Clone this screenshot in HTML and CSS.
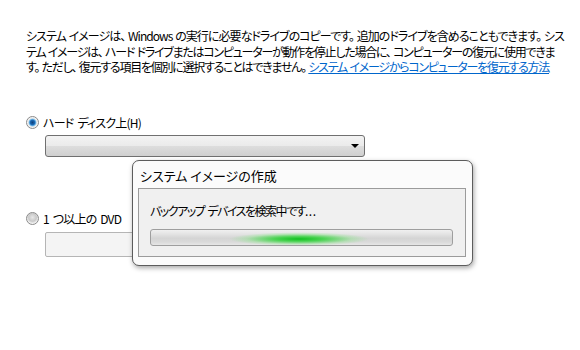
FILE: index.html
```html
<!DOCTYPE html>
<html lang="ja">
<head>
    <meta charset="UTF-8">
    <title>システム イメージの作成</title>
    <link rel="stylesheet" href="styles.css">
</head>
<body>
    <div class="page">
        <p class="intro">
            <span class="line line-first">システム イメージは、 Windows の実行に必要なドライブのコピーです。 追加のドライブを含めることもできます。 シス</span><br>
            <span class="line">テム イメージは、 ハード ドライブまたはコンピューターが動作を停止した場合に、 コンピューターの復元に使用できま</span><br>
            <span class="line">す。 ただし、 復元する項目を個別に選択することはできません。 <a href="#" class="link">システム イメージからコンピューターを復元する方法</a></span>
        </p>

        <div class="option">
            <span class="radio checked"></span>
            <span class="option-label">ハード ディスク上(H)</span>
        </div>
        <div class="select">
            <span class="arrow"></span>
        </div>

        <div class="option option-dvd">
            <span class="radio"></span>
            <span class="option-label">1 つ以上の DVD</span>
        </div>
        <div class="select select-off"></div>
    </div>

    <div class="dialog">
        <div class="dialog-title">システム イメージの作成</div>
        <div class="dialog-body">
            <div class="status">バックアップ デバイスを検索中です<span class="dots">...</span></div>
            <div class="progress">
                <div class="glow"></div>
            </div>
        </div>
    </div>
</body>
</html>
```

FILE: styles.css
```css
body {
    margin: 0;
    background-color: #fff;
    font-family: "Noto Sans CJK JP", "Noto Sans", sans-serif;
    font-size: 12px;
    color: #000;
    font-feature-settings: "palt";
}
.page {
    padding: 28px 20px 0 26px;
}
.intro {
    margin: 0;
    line-height: 15.5px;
    letter-spacing: -1.25px;
    word-spacing: 1px;
}
.line {
    white-space: nowrap;
}
.line-first {
    letter-spacing: -0.95px;
}
.link {
    color: #0066cc;
    text-decoration: underline;
}
.option {
    display: flex;
    align-items: center;
    gap: 4px;
    height: 16px;
    margin-top: 40px;
}
.option-dvd {
    margin-top: 54px;
}
.option-label {
    letter-spacing: -0.8px;
    word-spacing: 2px;
}
.radio {
    width: 11px;
    height: 11px;
    border-radius: 50%;
    border: 1px solid #8a8a8a;
    background: radial-gradient(circle at 50% 40%, #e8e8e8 0, #c9c9c9 45%, #f4f4f4 70%);
}
.radio.checked {
    background: radial-gradient(circle at 50% 50%, #0e3f7a 0, #1c6ab6 30%, #7ac1ee 45%, #e9e9e9 55%, #fdfdfd 75%);
}
.select {
    position: relative;
    width: 318px;
    height: 20px;
    margin: 4px 0 0 19px;
    border: 1px solid #707070;
    border-radius: 3px;
    background: linear-gradient(#f3f3f3 0, #ebebeb 48%, #dddddd 52%, #cfcfcf 100%);
}
.arrow {
    position: absolute;
    right: 5px;
    top: 8px;
    border-left: 4px solid transparent;
    border-right: 4px solid transparent;
    border-top: 4px solid #000;
}
.select-off {
    height: 23px;
    margin-top: 5px;
    border-color: #b5b5b5;
    border-radius: 2px;
    background: #f4f4f4;
}
.dialog {
    position: absolute;
    left: 132px;
    top: 160px;
    width: 339px;
    height: 104px;
    border: 1px solid #5c5c5c;
    border-radius: 7px;
    background: #fbfbfb;
    box-shadow: 1px 2px 5px rgba(0,0,0,0.35);
}
.dialog-title {
    padding: 6px 0 0 7px;
    height: 21px;
    line-height: 18px;
    font-size: 13px;
}
.dialog-body {
    margin: 0 6px 0 5px;
    height: 67px;
    border: 1px solid #9b9b9b;
    background: #f0f0f0;
    padding: 0 12px 0 11px;
}
.status {
    margin-top: 14px;
    line-height: 16px;
    letter-spacing: -1.5px;
    word-spacing: 2px;
}
.dots {
    letter-spacing: 0.5px;
}
.progress {
    position: relative;
    overflow: hidden;
    margin-top: 10px;
    height: 15px;
    border: 1px solid #9e9e9e;
    border-radius: 3px;
    background: linear-gradient(#f0f0f0 0, #e2e2e2 30%, #d4d4d4 55%, #dadada 80%, #e6e6e6 100%);
}
.glow {
    position: absolute;
    left: 78px;
    top: 0;
    width: 140px;
    height: 15px;
    background: radial-gradient(ellipse 50% 45% at 50% 60%, #10c020 0, rgba(40,210,50,0.8) 35%, rgba(120,230,120,0.35) 75%, rgba(200,240,200,0) 100%);
}
```
